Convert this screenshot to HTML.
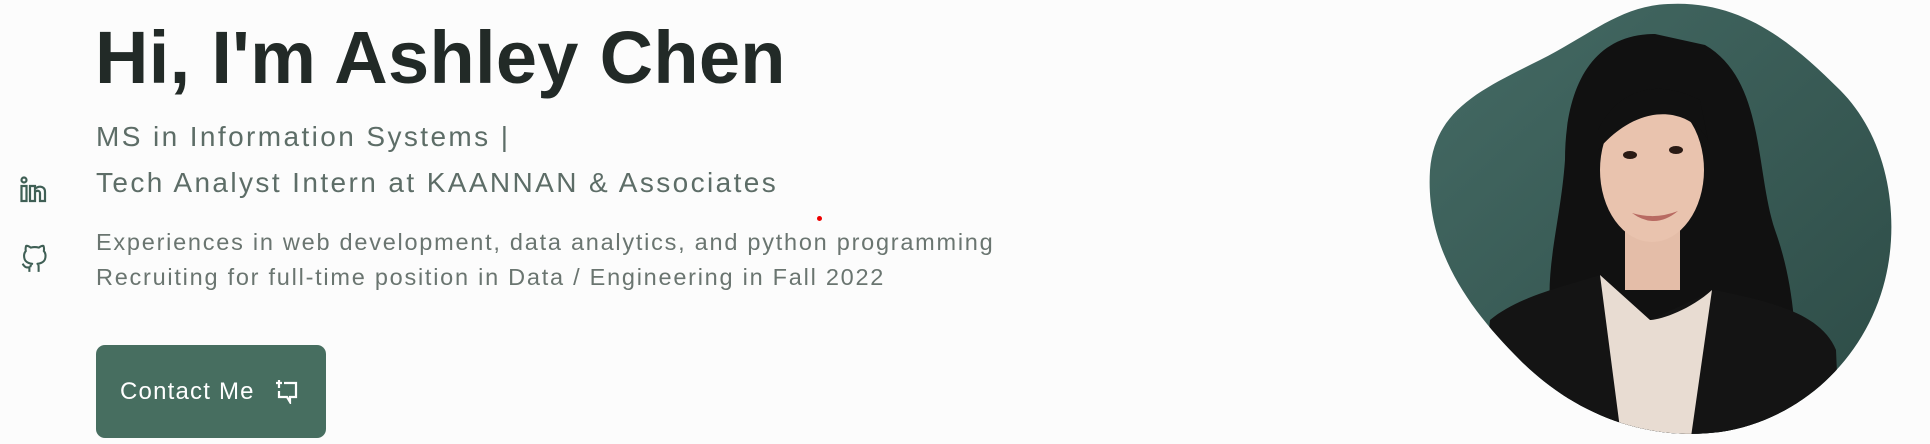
<!DOCTYPE html>
<html><head><meta charset="utf-8"><style>
html,body{margin:0;padding:0;background:#fcfcfc;width:1930px;height:444px;overflow:hidden;font-family:"Liberation Sans",sans-serif;position:relative}
.a{position:absolute;white-space:nowrap}
h1{position:absolute;left:95px;top:15px;margin:0;font-size:74px;font-weight:bold;color:#222a27;letter-spacing:0.3px}
.s{font-size:28px;color:#5d6d67;letter-spacing:2.4px}
.b{font-size:23.5px;color:#6a7570;letter-spacing:1.75px}
.btn{position:absolute;left:96px;top:345px;width:230px;height:93px;background:#476e60;border-radius:9px;color:#fff;font-size:24px;letter-spacing:1.2px}
</style></head><body>
<h1>Hi, I'm Ashley Chen</h1>
<div class="a s" style="left:96px;top:121px">MS in Information Systems |</div>
<div class="a s" style="left:96px;top:167px">Tech Analyst Intern at KAANNAN &amp; Associates</div>
<div class="a b" style="left:96px;top:229px">Experiences in web development, data analytics, and python programming</div>
<div class="a b" style="left:96px;top:264px">Recruiting for full-time position in Data / Engineering in Fall 2022</div>
<div class="a" style="left:817px;top:216px;width:5px;height:5px;border-radius:50%;background:#e00"></div>
<svg class="a" style="left:20px;top:176px" width="30" height="28" viewBox="0 0 30 28" fill="none" stroke="#3f5f55" stroke-width="2.2">
<circle cx="4" cy="4" r="2.5"/><rect x="1.5" y="10" width="5" height="15"/><path d="M10 25V10h5v3c2-3 10-4 10 3v9h-5v-8c0-3-5-3-5 0v8z"/></svg>
<svg class="a" style="left:20px;top:243px" width="28" height="30" viewBox="0 0 24 26" fill="none" stroke="#3f5f55" stroke-width="1.8" stroke-linejoin="round">
<path d="M8 25v-4c-4 1-5-2-6-3M16 25v-4c0-1.5 0-2.5-1-3 4-.5 7-2 7-7 0-1.5-.5-3-1.5-4 .3-1.5.3-3-.3-4.5 0 0-1.5-.3-4 1.5a13 13 0 0 0-7 0C6.7 2.2 5.2 2.5 5.2 2.5c-.6 1.5-.6 3-.3 4.5C3.9 8 3.4 9.5 3.4 11c0 5 3 6.5 7 7-1 .5-1.5 1.5-1.5 3"/></svg>
<div class="btn"><span class="a" style="left:24px;top:33px">Contact Me</span>
<svg class="a" style="left:179px;top:33px" width="24" height="26" viewBox="0 0 24 26" fill="none" stroke="#fff" stroke-width="2.2"><path d="M4 2v8M1 5h6M9 5h12v14h-6v5l-3-5H4v-6"/></svg></div>
<svg class="a" style="left:1420px;top:0" width="480" height="444" viewBox="1420 0 480 444">
<defs><clipPath id="c"><path d="M1668 4C1740 0 1790 40 1840 90C1890 140 1900 220 1885 280C1865 360 1800 420 1720 432C1640 442 1570 410 1520 360C1470 310 1425 250 1430 170C1435 110 1480 90 1540 60C1590 35 1620 6 1668 4Z"/></clipPath>
<linearGradient id="g" x1="0" y1="0" x2="1" y2="1"><stop offset="0" stop-color="#456b65"/><stop offset="1" stop-color="#2c4a45"/></linearGradient></defs>
<g clip-path="url(#c)">
<rect x="1420" y="0" width="480" height="444" fill="url(#g)"/>
<path d="M1655 34C1590 34 1565 90 1565 160C1560 230 1540 280 1555 340L1570 444H1800C1795 360 1800 300 1775 230C1755 170 1765 80 1705 45Z" fill="#111"/>
<path d="M1478 444L1490 320C1520 295 1570 285 1600 275L1650 320L1715 290C1760 300 1820 310 1836 350L1840 444Z" fill="#141414"/>
<path d="M1600 275L1622 444H1690L1712 290C1690 310 1660 320 1650 320Z" fill="#e8dcd2"/>
<rect x="1625" y="220" width="55" height="70" fill="#e4bda8"/>
<ellipse cx="1652" cy="170" rx="52" ry="72" fill="#e9c3ae"/>
<path d="M1598 130C1615 95 1650 75 1700 100L1708 140C1690 108 1640 100 1598 150Z" fill="#111"/>
<ellipse cx="1630" cy="155" rx="7" ry="4" fill="#2a1a14"/><ellipse cx="1676" cy="150" rx="7" ry="4" fill="#2a1a14"/>
<path d="M1632 213Q1655 230 1678 211Q1655 220 1632 213Z" fill="#b86a62"/>
</g></svg>
</body></html>
